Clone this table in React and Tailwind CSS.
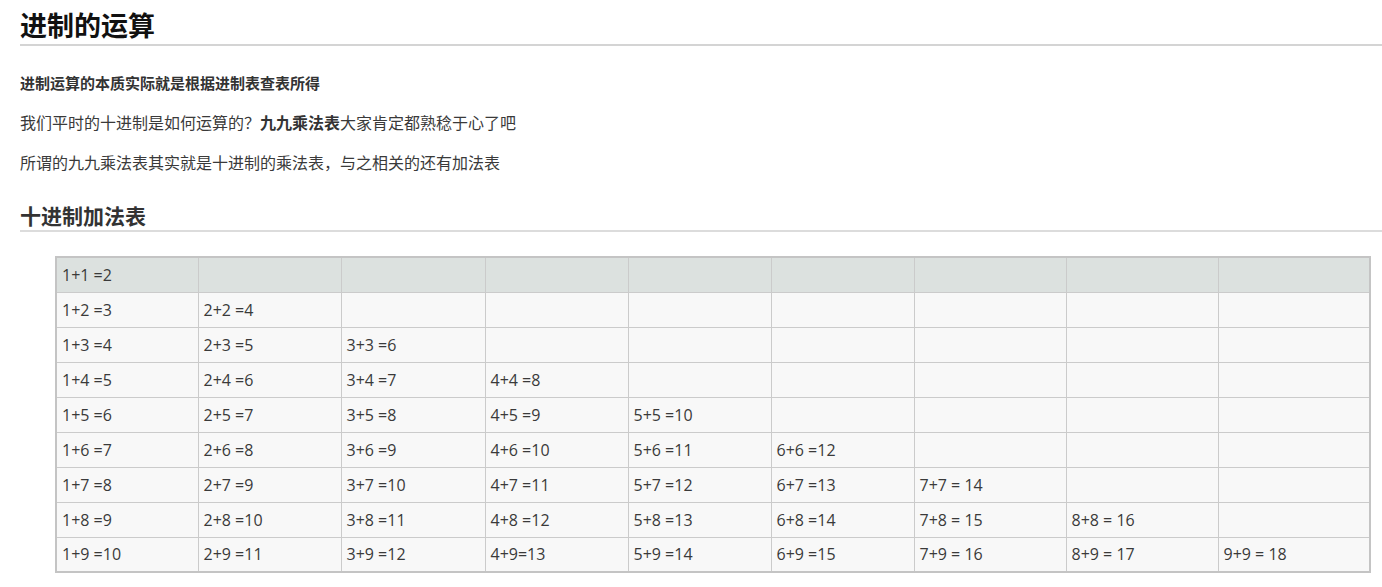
import React from "react";

const widths = [142, 143, 144, 143, 143, 143, 152, 152, 152];

function cellText(r, c) {
  const a = c + 1;
  const b = r + 1;
  if (a > b) return "";
  const s = a + b;
  if (a === 4 && b === 9) return "4+9=13";
  if (a >= 7) return `${a}+${b} = ${s}`;
  return `${a}+${b} =${s}`;
}

export default function App() {
  const rows = Array.from({ length: 9 }, (_, i) => i);
  return (
    <div
      className="bg-white w-[1382px] h-[587px] overflow-hidden pl-[20px] text-[#333]"
      style={{ fontFamily: '"Open Sans", "Noto Sans CJK SC", sans-serif' }}
    >
      <h1 className="mt-[8px] text-[27px] leading-[36px] font-bold text-[#111] border-b-2 border-[#d4d4d4] w-[1400px]">
        进制的运算
      </h1>
      <p className="mt-[25px] text-[15px] leading-[24px] font-bold text-[#333]">
        进制运算的本质实际就是根据进制表查表所得
      </p>
      <p className="mt-[16px] text-[16px] leading-[24px] text-[#3a3a3a]">
        我们平时的十进制是如何运算的？<b className="font-bold text-[#333]">九九乘法表</b>大家肯定都熟稔于心了吧
      </p>
      <p className="mt-[16px] text-[16px] leading-[24px] text-[#3a3a3a]">
        所谓的九九乘法表其实就是十进制的乘法表，与之相关的还有加法表
      </p>
      <h2 className="mt-[27px] text-[21px] leading-[28px] font-bold text-[#333] border-b-2 border-[#dcdcdc] w-[1400px]">
        十进制加法表
      </h2>
      <table className="mt-[24px] ml-[35px] table-fixed border-collapse w-[1314px] border-2 border-[#c4c4c4]">
        <colgroup>
          {widths.map((w, i) => (
            <col key={i} style={{ width: w }} />
          ))}
        </colgroup>
        <tbody>
          {rows.map((r) => (
            <tr key={r} className={r === 0 ? "bg-[#dce1df]" : "bg-[#f8f8f8]"}>
              {widths.map((_, c) => (
                <td
                  key={c}
                  className="h-[35px] border border-[#cbcbcb] pl-[5px] pr-[6px] py-0 text-[16px] leading-[22px] text-[#3a3a3a] whitespace-nowrap align-middle"
                >
                  {cellText(r, c)}
                </td>
              ))}
            </tr>
          ))}
        </tbody>
      </table>
    </div>
  );
}
